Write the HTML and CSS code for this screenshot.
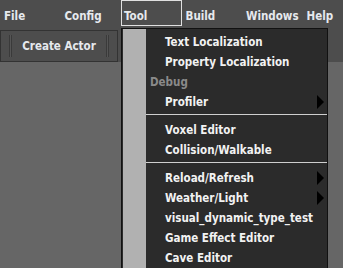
FILE: index.html
```html
<!DOCTYPE html>
<html lang="en">
<head>
  <meta charset="UTF-8">
  <title>Editor</title>
  <link rel="stylesheet" href="styles.css">
</head>
<body>

  <div class="menubar">
    <div class="menu-item">File</div>
    <div class="menu-item">Config</div>
    <div class="menu-item active">Tool</div>
    <div class="menu-item">Build</div>
    <div class="menu-item">Windows</div>
    <div class="menu-item">Help</div>
  </div>

  <div class="toolbar">
    <div class="toolbar-group">
      <span class="grip"></span>
      <span class="tool-btn">Create Actor</span>
      <span class="grip"></span>
    </div>
  </div>

  <div class="workspace"></div>

  <div class="dropdown">
    <div class="dropdown-gutter"></div>
    <div class="dropdown-list">
      <div class="dd-item">Text Localization</div>
      <div class="dd-item">Property Localization</div>
      <div class="dd-label">Debug</div>
      <div class="dd-item sub">Profiler</div>
      <div class="dd-sep"></div>
      <div class="dd-item">Voxel Editor</div>
      <div class="dd-item">Collision/Walkable</div>
      <div class="dd-sep"></div>
      <div class="dd-item sub">Reload/Refresh</div>
      <div class="dd-item sub">Weather/Light</div>
      <div class="dd-item">visual_dynamic_type_test</div>
      <div class="dd-item">Game Effect Editor</div>
      <div class="dd-item">Cave Editor</div>
    </div>
  </div>

</body>
</html>
```

FILE: styles.css
```css
body {
  margin: 0;
  background-color: #666;
  font-family: 'DejaVu Sans Condensed', 'DejaVu Sans', sans-serif;
  font-weight: bold;
  font-size: 11.5px;
  color: #f2f2f2;
  overflow: hidden;
  height: 268px;
  position: relative;
}

.menubar {
  background-color: #4d4d4d;
  height: 28px;
  display: flex;
  overflow: hidden;
}

.menu-item {
  width: 60.5px;
  height: 26px;
  box-sizing: border-box;
  padding: 9px 0 0 4px;
  line-height: 14px;
  color: #e6e9ee;
  flex-shrink: 0;
}

.menu-item.active {
  border: 1px solid #e0e0e0;
  padding: 8px 0 0 2px;
}

.toolbar {
  background-color: #4d4d4d;
  height: 34px;
  padding-top: 2px;
  box-sizing: border-box;
}

.toolbar-group {
  width: 118px;
  height: 32px;
  box-sizing: border-box;
  border: 1px solid #333;
  display: flex;
  align-items: center;
  padding: 0 8px;
}

.grip {
  width: 1px;
  height: 22px;
  border-left: 1px solid #3a3a3a;
  border-right: 1px solid #3a3a3a;
  background-color: #555;
}

.tool-btn {
  flex: 1;
  text-align: center;
  color: #e6e9ee;
  padding-bottom: 1px;
}

.dropdown {
  position: absolute;
  left: 121px;
  top: 28px;
  width: 207px;
  height: 250px;
  box-sizing: border-box;
  border: 1px solid #111;
  background-color: #2b2b2b;
  display: flex;
}

.dropdown-gutter {
  width: 23px;
  margin-left: 1px;
  background-color: #b1b1b1;
}

.dropdown-list {
  flex: 1;
  padding-top: 3px;
}

.dd-item {
  height: 20px;
  line-height: 20px;
  padding-left: 19px;
  position: relative;
}

.dd-label {
  height: 20px;
  line-height: 20px;
  padding-left: 4px;
  color: #8a8a8a;
}

.dd-item.sub::after {
  content: "";
  position: absolute;
  right: 3px;
  top: 3px;
  border-top: 7px solid transparent;
  border-bottom: 7px solid transparent;
  border-left: 7px solid #000;
}

.dd-sep {
  height: 8px;
  position: relative;
}

.dd-sep::before {
  content: "";
  position: absolute;
  left: 0;
  right: 0;
  top: 2px;
  border-top: 1px solid #cfcfcf;
}
```
